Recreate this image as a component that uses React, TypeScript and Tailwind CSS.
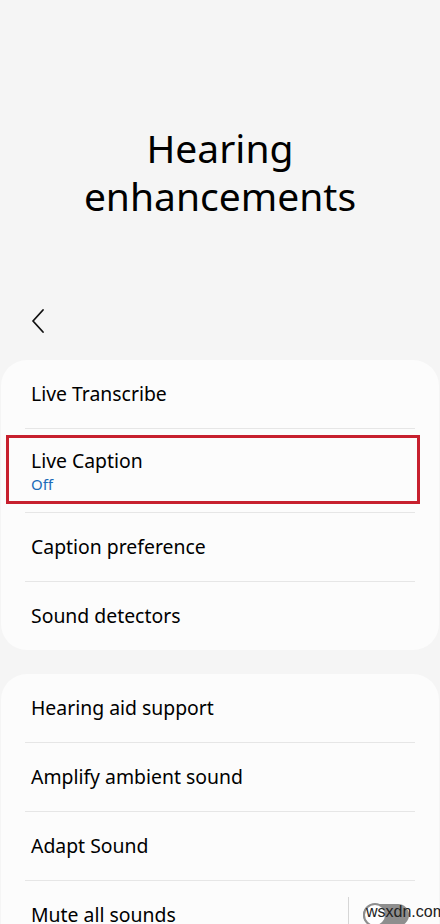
import React from "react";

const Divider = () => <div className="mx-6 h-px bg-[#e6e6e6]" />;

const Row = ({ title, sub }: { title: string; sub?: string }) => (
  <div className={`flex flex-col justify-center px-[30px] ${sub ? "h-[83px]" : "h-[68px]"}`}>
    <div className="text-[19.4px] leading-[26px] text-black">{title}</div>
    {sub && <div className="text-[15px] leading-[20px] text-[#1b6bb8]">{sub}</div>}
  </div>
);

export default function App() {
  return (
    <div
      className="relative h-[924px] w-[440px] overflow-hidden bg-[#f5f5f5]"
      style={{ fontFamily: '"Noto Sans", "Open Sans", sans-serif' }}
    >
      <div className="flex h-[290px] flex-col items-center justify-start pt-[124px]">
        <div className="text-center text-[39px] leading-[48px] text-black">
          Hearing
          <br />
          enhancements
        </div>
      </div>
      <div className="flex h-[70px] items-start pl-[30px] pt-[18px]">
        <svg width="16" height="26" viewBox="0 0 16 26" fill="none">
          <path d="M13 2 L3 13 L13 24" stroke="#111" strokeWidth="1.8" strokeLinecap="round" strokeLinejoin="round" />
        </svg>
      </div>
      <div className="mx-[1px] rounded-[26px] bg-[#fcfcfc]">
        <Row title="Live Transcribe" />
        <Divider />
        <div className="relative">
          <Row title="Live Caption" sub="Off" />
          <div className="pointer-events-none absolute left-[5px] top-[6px] h-[69px] w-[414px] border-[3px] border-[#c7202e]" />
        </div>
        <Divider />
        <Row title="Caption preference" />
        <Divider />
        <Row title="Sound detectors" />
      </div>
      <div className="mx-[1px] mt-[24px] rounded-[26px] bg-[#fcfcfc]">
        <Row title="Hearing aid support" />
        <Divider />
        <Row title="Amplify ambient sound" />
        <Divider />
        <Row title="Adapt Sound" />
        <Divider />
        <div className="flex h-[68px] items-center justify-between pl-[30px] pr-[30px]">
          <div className="text-[19.4px] leading-[26px] text-black">Mute all sounds</div>
          <div className="flex items-center gap-[14px]">
            <div className="h-[36px] w-px bg-[#d6d6d6]" />
            <div className="relative h-[22px] w-[46px] rounded-full bg-[#8e8e8e]">
              <div className="absolute left-0 top-[-1px] h-[24px] w-[24px] rounded-full border-2 border-[#8e8e8e] bg-white" />
            </div>
          </div>
        </div>
      </div>
      <div className="absolute left-[366px] top-[902px] text-[16px] leading-[20px] text-[#222]" style={{ fontFamily: '"Liberation Sans", sans-serif' }}>
        wsxdn.com
      </div>
    </div>
  );
}
